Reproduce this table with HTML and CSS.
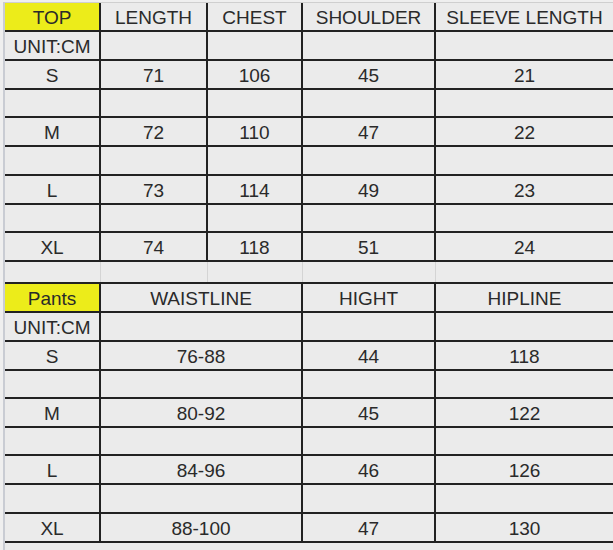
FILE: index.html
```html
<!DOCTYPE html>
<html>
<head>
<meta charset="utf-8">
<link rel="stylesheet" href="styles.css">
</head>
<body>
<div class="sheet">
  <div class="grid top-grid">
    <div class="cell yellow">TOP</div>
    <div class="cell">LENGTH</div>
    <div class="cell">CHEST</div>
    <div class="cell">SHOULDER</div>
    <div class="cell last">SLEEVE LENGTH</div>

    <div class="cell">UNIT:CM</div>
    <div class="cell"></div>
    <div class="cell"></div>
    <div class="cell"></div>
    <div class="cell last"></div>

    <div class="cell">S</div>
    <div class="cell">71</div>
    <div class="cell">106</div>
    <div class="cell">45</div>
    <div class="cell last">21</div>

    <div class="cell"></div>
    <div class="cell"></div>
    <div class="cell"></div>
    <div class="cell"></div>
    <div class="cell last"></div>

    <div class="cell">M</div>
    <div class="cell">72</div>
    <div class="cell">110</div>
    <div class="cell">47</div>
    <div class="cell last">22</div>

    <div class="cell"></div>
    <div class="cell"></div>
    <div class="cell"></div>
    <div class="cell"></div>
    <div class="cell last"></div>

    <div class="cell">L</div>
    <div class="cell">73</div>
    <div class="cell">114</div>
    <div class="cell">49</div>
    <div class="cell last">23</div>

    <div class="cell"></div>
    <div class="cell"></div>
    <div class="cell"></div>
    <div class="cell"></div>
    <div class="cell last"></div>

    <div class="cell">XL</div>
    <div class="cell">74</div>
    <div class="cell">118</div>
    <div class="cell">51</div>
    <div class="cell last">24</div>
  </div>

  <div class="grid gap-grid">
    <div class="gcell"></div>
    <div class="gcell"></div>
    <div class="gcell"></div>
    <div class="gcell"></div>
    <div class="gcell last"></div>
  </div>

  <div class="grid pants-grid">
    <div class="cell yellow">Pants</div>
    <div class="cell">WAISTLINE</div>
    <div class="cell">HIGHT</div>
    <div class="cell last">HIPLINE</div>

    <div class="cell">UNIT:CM</div>
    <div class="cell"></div>
    <div class="cell"></div>
    <div class="cell last"></div>

    <div class="cell">S</div>
    <div class="cell">76-88</div>
    <div class="cell">44</div>
    <div class="cell last">118</div>

    <div class="cell"></div>
    <div class="cell"></div>
    <div class="cell"></div>
    <div class="cell last"></div>

    <div class="cell">M</div>
    <div class="cell">80-92</div>
    <div class="cell">45</div>
    <div class="cell last">122</div>

    <div class="cell"></div>
    <div class="cell"></div>
    <div class="cell"></div>
    <div class="cell last"></div>

    <div class="cell">L</div>
    <div class="cell">84-96</div>
    <div class="cell">46</div>
    <div class="cell last">126</div>

    <div class="cell"></div>
    <div class="cell"></div>
    <div class="cell"></div>
    <div class="cell last"></div>

    <div class="cell">XL</div>
    <div class="cell">88-100</div>
    <div class="cell">47</div>
    <div class="cell last">130</div>
  </div>
</div>
</body>
</html>
```

FILE: styles.css
```css
html, body {
  margin: 0;
  padding: 0;
  background: #efefef;
}
body {
  width: 613px;
  height: 550px;
  overflow: hidden;
  font-family: "Liberation Sans", Arial, sans-serif;
  color: #2a2a2a;
}
.sheet {
  margin: 2px 0 0 3px;
  border-left: 2px solid #c9ccd3;
  border-top: 1px solid #cfcfcf;
  background: #ebebeb;
  height: 548px;
  box-sizing: border-box;
}
.grid {
  display: grid;
}
.top-grid {
  grid-template-columns: 96px 107px 95px 133px 1fr;
  grid-template-rows: 29px 29px 29px 28px 29px 29px 29px 28px 29px;
}
.gap-grid {
  grid-template-columns: 96px 107px 95px 133px 1fr;
  height: 20px;
}
.pants-grid {
  grid-template-columns: 96px 202px 133px 1fr;
  grid-template-rows: 29px 29px 29px 28px 29px 28px 29px 29px 29px;
  border-top: 2px solid #222;
}
.cell {
  box-sizing: border-box;
  border-right: 2px solid #222;
  border-bottom: 2px solid #222;
  display: flex;
  align-items: center;
  justify-content: center;
  font-size: 19px;
  line-height: 1;
  padding-top: 1px;
  background: #ebebeb;
  white-space: nowrap;
}
.cell.last {
  border-right: none;
}
.yellow {
  background: #ecec1a;
}
.gcell {
  box-sizing: border-box;
  border-right: 1px solid #d4d4d4;
  background: #ebebeb;
}
.gcell.last {
  border-right: none;
}
```
